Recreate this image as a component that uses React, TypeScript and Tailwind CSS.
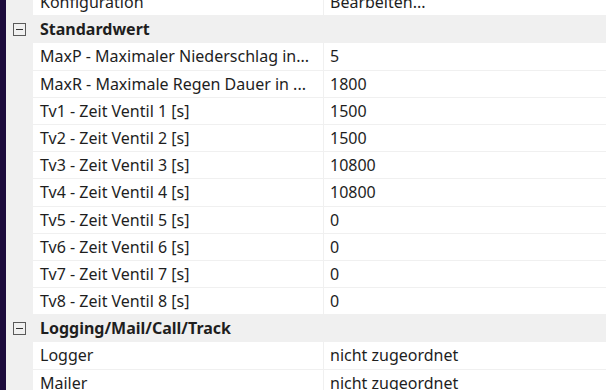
import React from 'react';

type Row = { name: string; value: string };
type Group = { title: string; rows: Row[] };

const groups: Group[] = [
  {
    title: 'Standardwert',
    rows: [
      { name: 'MaxP - Maximaler Niederschlag in...', value: '5' },
      { name: 'MaxR - Maximale Regen Dauer in ...', value: '1800' },
      { name: 'Tv1 - Zeit Ventil 1 [s]', value: '1500' },
      { name: 'Tv2 - Zeit Ventil 2 [s]', value: '1500' },
      { name: 'Tv3 - Zeit Ventil 3 [s]', value: '10800' },
      { name: 'Tv4 - Zeit Ventil 4 [s]', value: '10800' },
      { name: 'Tv5 - Zeit Ventil 5 [s]', value: '0' },
      { name: 'Tv6 - Zeit Ventil 6 [s]', value: '0' },
      { name: 'Tv7 - Zeit Ventil 7 [s]', value: '0' },
      { name: 'Tv8 - Zeit Ventil 8 [s]', value: '0' },
    ],
  },
  {
    title: 'Logging/Mail/Call/Track',
    rows: [
      { name: 'Logger', value: 'nicht zugeordnet' },
      { name: 'Mailer', value: 'nicht zugeordnet' },
    ],
  },
];

function PropertyRow({ name, value }: Row) {
  return (
    <div className="flex h-[27.2px] border-b border-[#f0f0f0]">
      <div className="w-[27px] shrink-0 bg-[#f0f0f0]" />
      <div className="w-[291px] shrink-0 overflow-hidden whitespace-nowrap bg-white pl-[7px] pr-[4px] leading-[26px] border-r border-[#f0f0f0]">
        {name}
      </div>
      <div className="min-w-0 flex-1 overflow-hidden whitespace-nowrap bg-white pl-[6px] leading-[26px]">{value}</div>
    </div>
  );
}

function CategoryRow({ title }: { title: string }) {
  return (
    <div className="flex h-[27.2px] items-center bg-[#f0f0f0] border-b border-[#f0f0f0]">
      <div className="flex w-[27px] shrink-0 justify-center">
        <div className="relative h-[13px] w-[13px] border border-[#5a5a5a] bg-[#f0f0f0]">
          <div className="absolute left-[2px] right-[2px] top-[5px] h-[1px] bg-[#333]" />
        </div>
      </div>
      <div className="pl-[7px] font-bold">{title}</div>
    </div>
  );
}

export default function App() {
  return (
    <div
      className="flex h-[390px] w-[606px] overflow-hidden bg-[#f0f0f0] text-[16px] text-[#1e1e1e]"
      style={{ fontFamily: '"Segoe UI", "Noto Sans", "Open Sans", sans-serif' }}
    >
      <div className="w-[6px] shrink-0 bg-[#1c0b3c]" />
      <div className="flex-1 -mt-[11px]">
        <PropertyRow name="Konfiguration" value="Bearbeiten..." />
        {groups.map((g) => (
          <div key={g.title}>
            <CategoryRow title={g.title} />
            {g.rows.map((r) => (
              <PropertyRow key={r.name} {...r} />
            ))}
          </div>
        ))}
      </div>
    </div>
  );
}
